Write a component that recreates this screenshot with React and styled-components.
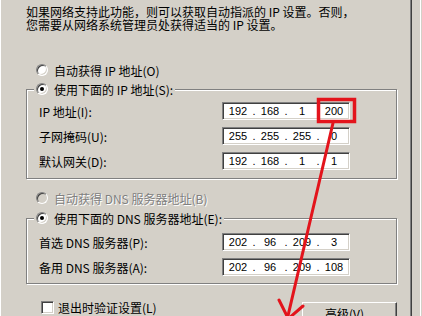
import React from "react";
import styled, { createGlobalStyle } from "styled-components";

const GlobalStyle = createGlobalStyle`
  html, body {
    margin: 0;
    padding: 0;
    background: #d4d0c8;
  }
  body {
    font-family: "Noto Sans CJK SC", "Noto Sans", sans-serif;
    font-size: 12px;
    color: #000;
  }
`;

const Frame = styled.div`
  position: relative;
  width: 422px;
  height: 316px;
  overflow: hidden;
  display: flex;
  background: #d4d0c8;
`;

const Page = styled.div`
  flex-shrink: 0;
  width: 411px;
  box-sizing: border-box;
  padding: 5px 13px 0 25px;
  border-left: 1px solid #fff;
  border-right: 1px solid #808080;
  box-shadow: 1px 0 0 #404040;
  display: flex;
  flex-direction: column;
`;

const Edge = styled.div`
  flex: 1;
  margin-right: 1px;
  border-right: 1px solid #fff;
`;

const Intro = styled.p`
  margin: 0;
  line-height: 13px;
  white-space: nowrap;
`;

const RadioRow = styled.label`
  display: flex;
  align-items: center;
  gap: 6px;
  height: 16px;
  margin-left: ${(p) => p.$indent ?? 10}px;
  margin-top: ${(p) => p.$top ?? 0}px;
  white-space: nowrap;
  color: ${(p) => (p.$disabled ? "#808080" : "#000")};
  text-shadow: ${(p) => (p.$disabled ? "1px 1px 0 #fff" : "none")};
`;

const Radio = styled.span`
  position: relative;
  flex-shrink: 0;
  width: 12px;
  height: 12px;
  box-sizing: border-box;
  border-radius: 50%;
  border: 1px solid;
  border-color: #808080 #fff #fff #808080;
  box-shadow: inset 1px 1px 0 #404040, inset -1px -1px 0 #d4d0c8;
  background: ${(p) => (p.$disabled ? "#d4d0c8" : "#fff")};

  &::after {
    content: "";
    display: ${(p) => (p.$checked ? "block" : "none")};
    position: absolute;
    left: 3px;
    top: 3px;
    width: 4px;
    height: 4px;
    border-radius: 50%;
    background: #000;
  }
`;

const Group = styled.fieldset`
  margin: ${(p) => p.$top}px 0 0 0;
  padding: 0;
  min-width: 0;
  border: 1px solid #808080;
  box-shadow: inset 1px 1px 0 #fff, 1px 1px 0 #fff;
`;

const Legend = styled.legend`
  margin-left: 7px;
  padding: 0 2px;
  height: 16px;
  background: #d4d0c8;
`;

const Rows = styled.div`
  display: grid;
  grid-template-columns: 183px 128px;
  row-gap: 7px;
  align-items: center;
  padding: ${(p) => p.$pt}px 0 ${(p) => p.$pb}px 12px;
`;

const Label = styled.span`
  white-space: nowrap;
`;

const Field = styled.div`
  width: 128px;
  height: 18px;
  box-sizing: border-box;
  background: #fff;
  border: 1px solid;
  border-color: #808080 #fff #fff #808080;
  box-shadow: inset 1px 1px 0 #404040, inset -1px -1px 0 #d4d0c8;
  display: flex;
  align-items: center;
  padding-left: 1px;
  font-family: "Liberation Sans", Arial, sans-serif;
  font-size: 11px;
`;

const Seg = styled.span`
  width: 28px;
  text-align: center;
`;

const Dot = styled.span`
  width: 4px;
  text-align: center;
`;

const Bottom = styled.div`
  display: flex;
  justify-content: space-between;
  align-items: flex-start;
  margin-top: 16px;
  padding-left: 15px;
`;

const CheckRow = styled.label`
  display: flex;
  align-items: center;
  gap: 4px;
  height: 14px;
  white-space: nowrap;
`;

const Check = styled.span`
  width: 13px;
  height: 13px;
  box-sizing: border-box;
  background: #fff;
  border: 1px solid;
  border-color: #808080 #fff #fff #808080;
  box-shadow: inset 1px 1px 0 #404040, inset -1px -1px 0 #d4d0c8;
`;

const Button = styled.button`
  margin-top: 2px;
  width: 95px;
  height: 23px;
  padding: 0;
  background: #d4d0c8;
  font-family: inherit;
  font-size: 12px;
  line-height: 14px;
  color: #000;
  border: 1px solid;
  border-color: #fff #404040 #404040 #fff;
  box-shadow: inset -1px -1px 0 #808080;
`;

const Overlay = styled.svg`
  position: absolute;
  left: 0;
  top: 0;
  pointer-events: none;
`;

function IpField({ parts }) {
  return (
    <Field>
      {parts.map((p, i) => (
        <React.Fragment key={i}>
          {i > 0 && <Dot>.</Dot>}
          <Seg>{p}</Seg>
        </React.Fragment>
      ))}
    </Field>
  );
}

const ipRows = [
  { label: "IP 地址(I):", parts: ["192", "168", "1", "200"] },
  { label: "子网掩码(U):", parts: ["255", "255", "255", "0"] },
  { label: "默认网关(D):", parts: ["192", "168", "1", "1"] },
];

const dnsRows = [
  { label: "首选 DNS 服务器(P):", parts: ["202", "96", "209", "3"] },
  { label: "备用 DNS 服务器(A):", parts: ["202", "96", "209", "108"] },
];

export default function App() {
  return (
    <Frame>
      <GlobalStyle />
      <Page>
        <Intro>
          如果网络支持此功能，则可以获取自动指派的 IP 设置。否则，
          <br />
          您需要从网络系统管理员处获得适当的 IP 设置。
        </Intro>

        <RadioRow $top={31}>
          <Radio />
          自动获得 IP 地址(O)
        </RadioRow>
        <Group $top={3}>
          <Legend>
            <RadioRow $indent={0}>
              <Radio $checked />
              使用下面的 IP 地址(S):
            </RadioRow>
          </Legend>
          <Rows $pt={5} $pb={8}>
            {ipRows.map((r) => (
              <React.Fragment key={r.label}>
                <Label>{r.label}</Label>
                <IpField parts={r.parts} />
              </React.Fragment>
            ))}
          </Rows>
        </Group>

        <RadioRow $top={11} $disabled>
          <Radio $disabled />
          自动获得 DNS 服务器地址(B)
        </RadioRow>
        <Group $top={4}>
          <Legend>
            <RadioRow $indent={0}>
              <Radio $checked />
              使用下面的 DNS 服务器地址(E):
            </RadioRow>
          </Legend>
          <Rows $pt={7} $pb={7}>
            {dnsRows.map((r) => (
              <React.Fragment key={r.label}>
                <Label>{r.label}</Label>
                <IpField parts={r.parts} />
              </React.Fragment>
            ))}
          </Rows>
        </Group>

        <Bottom>
          <CheckRow>
            <Check />
            退出时验证设置(L)
          </CheckRow>
          <Button>高级(V)...</Button>
        </Bottom>
      </Page>
      <Edge />

      <Overlay width="422" height="316" viewBox="0 0 422 316">
        <rect x="318.5" y="99.5" width="36" height="22" fill="none" stroke="#e3141c" strokeWidth="3.5" />
        <g stroke="#e3141c" strokeWidth="3" strokeLinecap="round" fill="none">
          <line x1="333" y1="123" x2="287" y2="320" />
          <line x1="279" y1="300" x2="288" y2="318" />
          <line x1="303" y1="306" x2="288" y2="319" />
        </g>
      </Overlay>
    </Frame>
  );
}
